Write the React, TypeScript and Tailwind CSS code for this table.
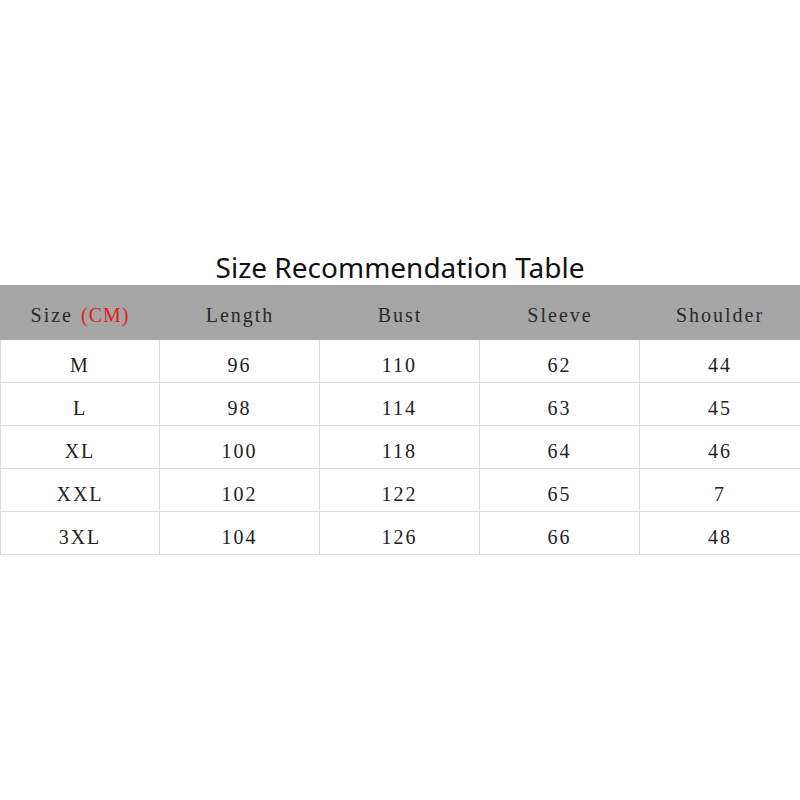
const columns = ['Length', 'Bust', 'Sleeve', 'Shoulder'];

const rows = [
  ['M', '96', '110', '62', '44'],
  ['L', '98', '114', '63', '45'],
  ['XL', '100', '118', '64', '46'],
  ['XXL', '102', '122', '65', '7'],
  ['3XL', '104', '126', '66', '48'],
];

export default function App() {
  return (
    <div className="w-[800px] h-[800px] bg-white pt-[250px]">
      {/* Title */}
      <h1 className="h-[35px] text-center text-[28px] leading-[35px] text-[#111] font-['Noto_Sans','Noto_Sans_CJK_SC',sans-serif]">
        Size Recommendation Table
      </h1>

      <div className="font-['Liberation_Serif','Noto_Sans_CJK_SC',serif] text-[20px] tracking-[2px]">
        {/* Header */}
        <div className="grid grid-cols-5 h-[55px] bg-[#a6a6a6] text-[#2a2a2a]">
          <div className="flex items-center justify-center pt-1">
            Size<span className="ml-2 tracking-[1px] text-[#e01b1b]">(CM)</span>
          </div>
          {columns.map((c) => (
            <div key={c} className="flex items-center justify-center pt-1">
              {c}
            </div>
          ))}
        </div>

        {/* Body */}
        {rows.map((r, i) => (
          <div
            key={i}
            className="grid grid-cols-5 h-[43px] border-b border-[#dcdcdc] text-[#222]"
          >
            {r.map((v, j) => (
              <div
                key={j}
                className={`flex items-center justify-center pt-2 ${
                  j < 4 ? 'border-r border-[#dcdcdc]' : ''
                } ${j === 0 ? 'border-l' : ''}`}
              >
                {v}
              </div>
            ))}
          </div>
        ))}
      </div>
    </div>
  );
}
